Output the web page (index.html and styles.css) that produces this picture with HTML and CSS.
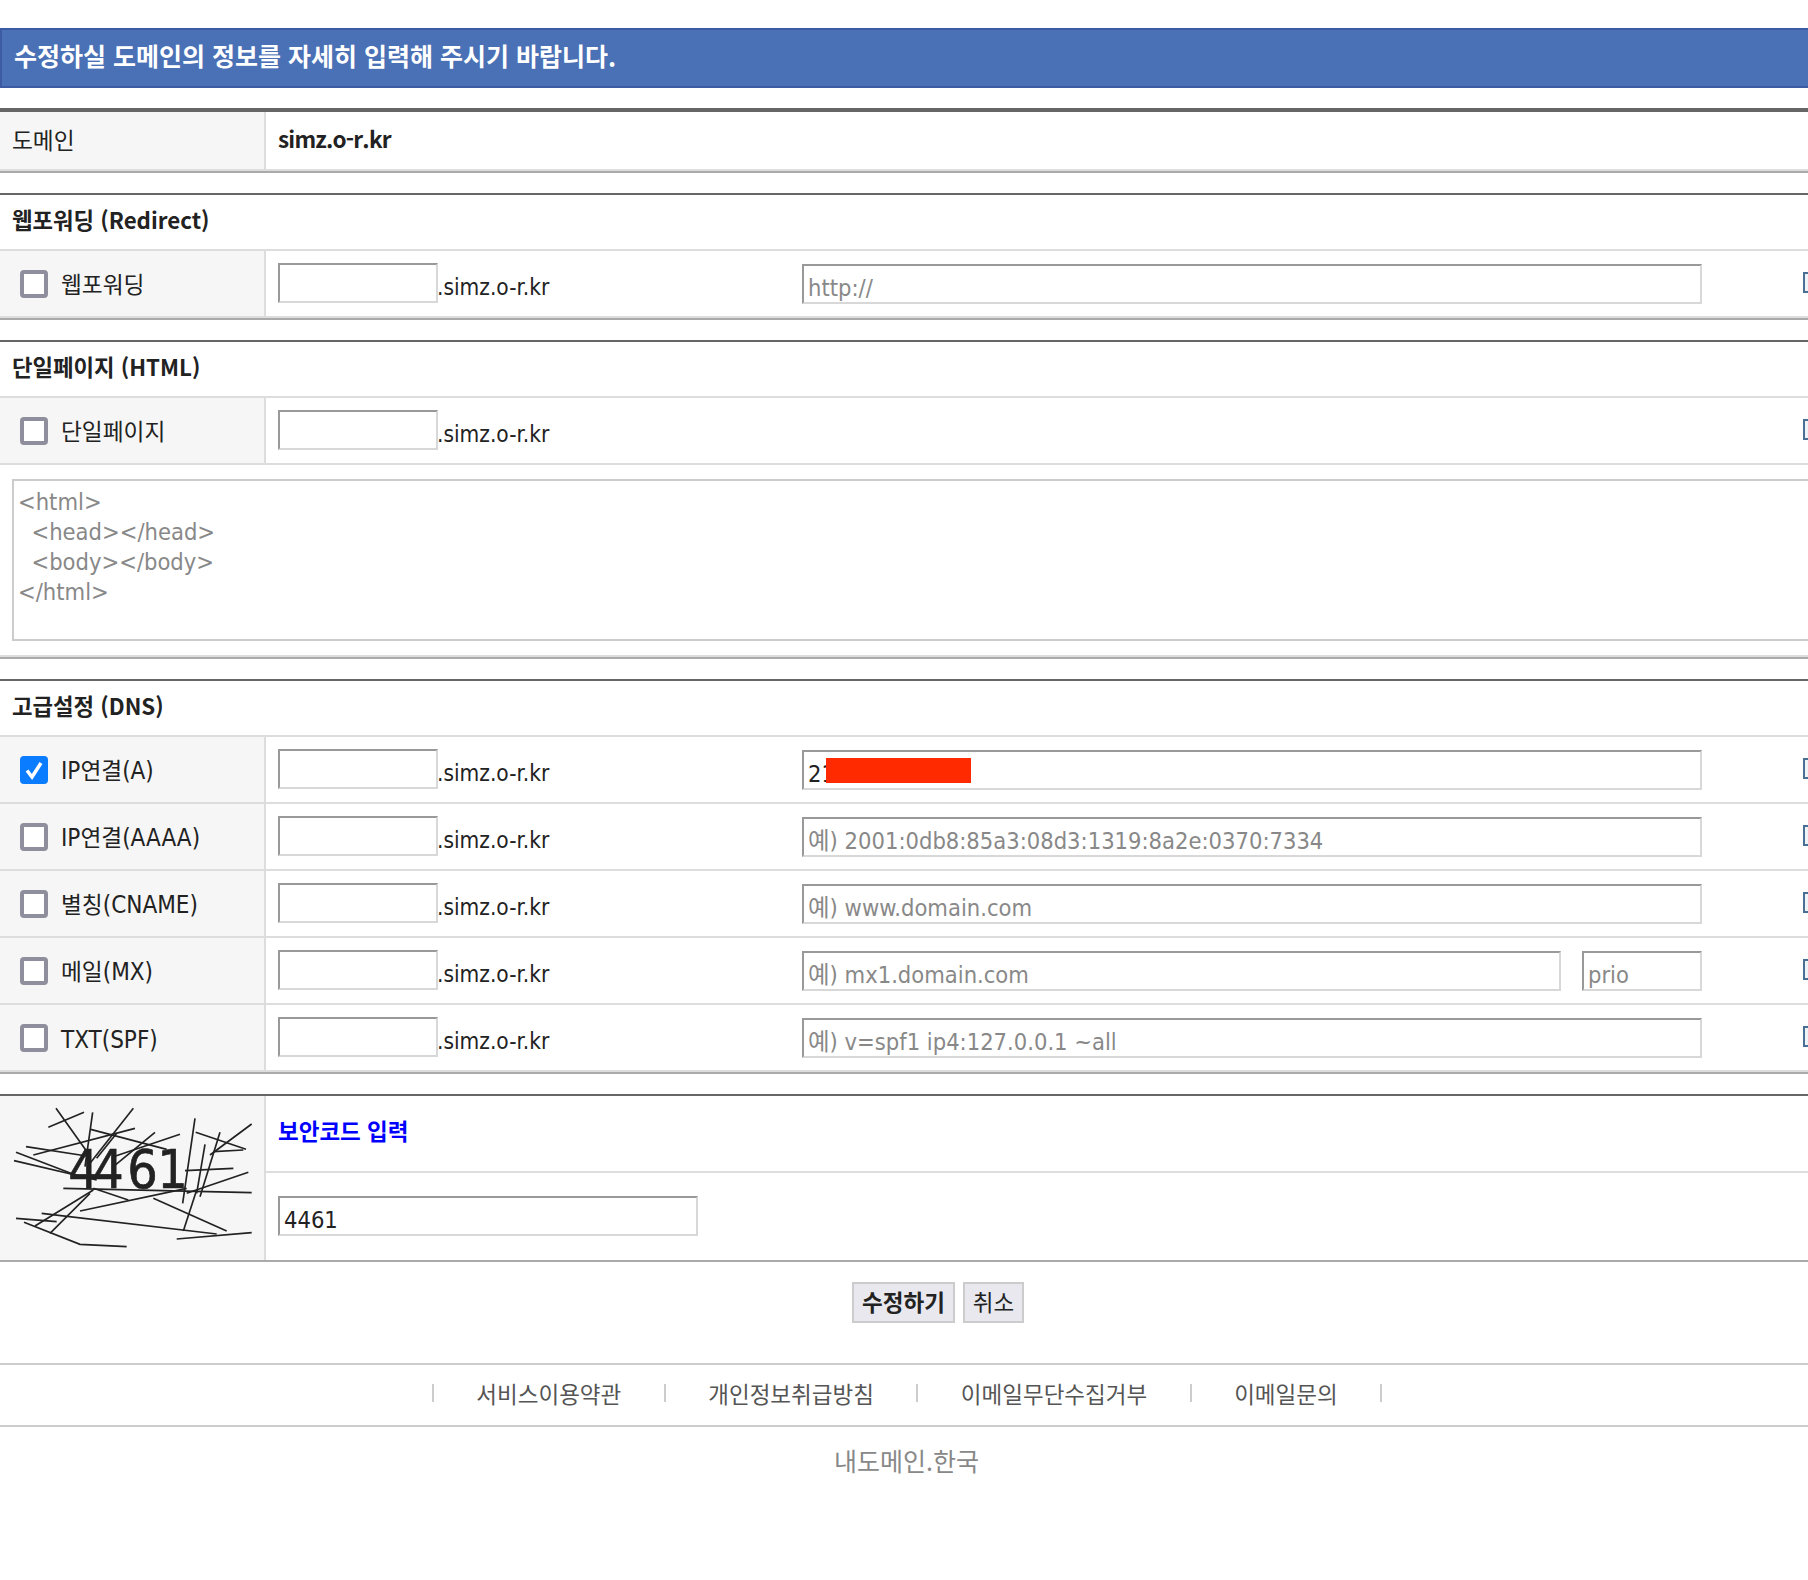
FILE: index.html
```html
<!DOCTYPE html>
<html lang="ko">
<head>
    <meta charset="UTF-8">
    <meta name="viewport" content="width=device-width, initial-scale=1.0">
    <title>도메인 수정</title>
    <link rel="stylesheet" href="styles.css">
</head>
<body>
    <div class="wrap">
        <h2 class="banner">수정하실 도메인의 정보를 자세히 입력해 주시기 바랍니다.</h2>

        <div class="tbl tbl-first">
            <div class="row row-domain">
                <div class="label">도메인</div>
                <div class="cell"><b class="domain-name">simz.o-r.kr</b></div>
            </div>
        </div>

        <div class="tbl">
            <div class="head">웹포워딩 (Redirect)</div>
            <div class="row">
                <div class="label"><span class="check"></span><span>웹포워딩</span></div>
                <div class="cell">
                    <input class="sub" type="text"><span class="suffix">.simz.o-r.kr</span>
                    <input class="target" type="text" placeholder="http://">
                    <span class="btn-edge"></span>
                </div>
            </div>
        </div>

        <div class="tbl">
            <div class="head">단일페이지 (HTML)</div>
            <div class="row">
                <div class="label"><span class="check"></span><span>단일페이지</span></div>
                <div class="cell">
                    <input class="sub" type="text"><span class="suffix">.simz.o-r.kr</span>
                    <span class="target-empty"></span>
                    <span class="btn-edge"></span>
                </div>
            </div>
            <div class="html-row">
                <textarea class="html-box" rows="5"><html>
  <head></head>
  <body></body>
</html></textarea>
            </div>
        </div>

        <div class="tbl">
            <div class="head">고급설정 (DNS)</div>
            <div class="row">
                <div class="label"><span class="check on"><svg viewBox="0 0 28 28" width="28" height="28"><path d="M7 14.5l5 6.5L21 7" fill="none" stroke="#fff" stroke-width="3.5"/></svg></span><span><span class="en">IP</span>연결<span class="en">(A)</span></span></div>
                <div class="cell">
                    <input class="sub" type="text"><span class="suffix">.simz.o-r.kr</span>
                    <span class="target-wrap">
                        <input class="target target-filled" type="text" value="21">
                        <span class="redact"></span>
                    </span>
                    <span class="btn-edge"></span>
                </div>
            </div>
            <div class="row">
                <div class="label"><span class="check"></span><span><span class="en">IP</span>연결<span class="en">(AAAA)</span></span></div>
                <div class="cell">
                    <input class="sub" type="text"><span class="suffix">.simz.o-r.kr</span>
                    <input class="target" type="text" placeholder="예) 2001:0db8:85a3:08d3:1319:8a2e:0370:7334">
                    <span class="btn-edge"></span>
                </div>
            </div>
            <div class="row">
                <div class="label"><span class="check"></span><span>별칭<span class="en">(CNAME)</span></span></div>
                <div class="cell">
                    <input class="sub" type="text"><span class="suffix">.simz.o-r.kr</span>
                    <input class="target" type="text" placeholder="예) www.domain.com">
                    <span class="btn-edge"></span>
                </div>
            </div>
            <div class="row">
                <div class="label"><span class="check"></span><span>메일<span class="en">(MX)</span></span></div>
                <div class="cell">
                    <input class="sub" type="text"><span class="suffix">.simz.o-r.kr</span>
                    <input class="target target-mx" type="text" placeholder="예) mx1.domain.com">
                    <input class="target prio" type="text" placeholder="prio">
                    <span class="btn-edge"></span>
                </div>
            </div>
            <div class="row row-last">
                <div class="label"><span class="check"></span><span class="en">TXT(SPF)</span></div>
                <div class="cell">
                    <input class="sub" type="text"><span class="suffix">.simz.o-r.kr</span>
                    <input class="target" type="text" placeholder="예) v=spf1 ip4:127.0.0.1 ~all">
                    <span class="btn-edge"></span>
                </div>
            </div>
        </div>

        <div class="tbl tbl-captcha">
            <div class="captcha-img">
                <svg viewBox="0 0 780 480" width="260" height="160">
                    <g class="captcha-lines">
                        <path d="M168 25L268 165"/>
                        <path d="M145 82L252 37"/>
                        <path d="M278 37L255 200"/>
                        <path d="M400 25L270 190"/>
                        <path d="M350 100L290 175"/>
                        <path d="M272 88L500 148"/>
                        <path d="M100 165L405 85"/>
                        <path d="M78 140L260 168"/>
                        <path d="M465 97L340 200"/>
                        <path d="M540 103L340 170"/>
                        <path d="M48 157L240 230"/>
                        <path d="M42 182L290 240"/>
                        <path d="M585 55L548 310"/>
                        <path d="M587 97L738 148"/>
                        <path d="M660 97L600 290"/>
                        <path d="M615 133L590 280"/>
                        <path d="M755 72L630 165"/>
                        <path d="M640 155L730 150"/>
                        <path d="M190 265L755 278"/>
                        <path d="M555 212L700 205"/>
                        <path d="M560 280L745 217"/>
                        <path d="M280 265L385 300"/>
                        <path d="M240 333L560 265"/>
                        <path d="M460 295L680 393"/>
                        <path d="M280 270L105 378"/>
                        <path d="M270 280L150 400"/>
                        <path d="M590 270L550 393"/>
                        <path d="M48 355L170 365"/>
                        <path d="M125 340L650 402"/>
                        <path d="M72 367L240 433L380 440"/>
                        <path d="M530 417L755 398"/>
                    </g>
                    <text class="captcha-text" x="205 280 382 472" y="265">4461</text>
                </svg>
            </div>
            <div class="captcha-side">
                <div class="captcha-title">보안코드 입력</div>
                <div class="captcha-input"><input class="code" type="text" value="4461"></div>
            </div>
        </div>

        <div class="actions">
            <button class="btn btn-main" type="button">수정하기</button>
            <button class="btn" type="button">취소</button>
        </div>
    </div>

    <div class="foot-links">
        <span class="sep"></span><a href="#">서비스이용약관</a>
        <span class="sep"></span><a href="#">개인정보취급방침</a>
        <span class="sep"></span><a href="#">이메일무단수집거부</a>
        <span class="sep"></span><a href="#">이메일문의</a>
        <span class="sep"></span>
    </div>
    <div class="brand">내도메인.한국</div>
</body>
</html>
```

FILE: styles.css
```css
html, body {
    overflow-x: hidden;
}
body {
    margin: 0;
    padding: 0;
    font-family: "DejaVu Sans Condensed", "Noto Sans CJK KR", sans-serif;
    font-size: 22.5px;
    color: #222;
    background-color: #fff;
}
.wrap {
    width: 1876px;
    padding-top: 28px;
}
.banner {
    margin: 0;
    height: 60px;
    box-sizing: border-box;
    padding-left: 12px;
    line-height: 50px;
    font-family: "Noto Sans CJK KR", sans-serif;
    font-size: 25px;
    font-weight: 700;
    color: #fff;
    background-color: #4a70b5;
    border: 2px solid #3c5ba3;
}
.tbl {
    margin-top: 20px;
    border-top: 2px solid #666;
    border-bottom: 2px solid #aaa;
}
.tbl-first {
    border-top-width: 4px;
}
.head {
    height: 54px;
    line-height: 48px;
    padding-left: 12px;
    font-family: "Noto Sans CJK KR", sans-serif;
    font-size: 22.3px;
    font-weight: 700;
    border-bottom: 2px solid #ddd;
}
.row {
    display: grid;
    grid-template-columns: 266px 1fr;
    height: 65px;
    border-bottom: 2px solid #ddd;
}
.row-domain {
    height: 57px;
}
.label {
    display: flex;
    align-items: center;
    padding: 3px 0 0 12px;
    font-size: 22.7px;
    line-height: 30px;
    background-color: #f6f6f6;
    border-right: 2px solid #ddd;
}
.row-domain .label {
    padding-top: 0;
}
.row-last .label {
    padding-top: 5px;
}
.en {
    font-size: 24px;
}
.check {
    flex: none;
    width: 28px;
    height: 28px;
    box-sizing: border-box;
    margin: -3px 13px 0 8px;
    background-color: #fff;
    border: 4px solid #8e8e9c;
    border-radius: 4px;
}
.row-last .check {
    margin-top: -5px;
}
.check.on {
    background-color: #0a7cff;
    border: none;
}
.check svg {
    display: block;
}
.cell {
    display: flex;
    align-items: flex-start;
    padding: 12px 0 0 12px;
}
.domain-name {
    font-family: "Noto Sans CJK KR", sans-serif;
    letter-spacing: -0.8px;
    line-height: 28px;
}
input, textarea {
    font-family: "DejaVu Sans Condensed", "Noto Sans CJK KR", sans-serif;
    font-size: 23.5px;
    color: #222;
    box-sizing: border-box;
    border-style: solid;
    border-width: 2px;
    border-color: #999 #d8d8d8 #d8d8d8 #999;
    border-radius: 0;
    outline: none;
    background-color: #fff;
}
input::placeholder {
    color: #888;
    opacity: 1;
}
.sub {
    flex: none;
    width: 160px;
    height: 40px;
}
.suffix {
    flex: none;
    width: 364px;
    line-height: 48px;
    margin-left: -1px;
    padding-right: 1px;
}
.target {
    flex: none;
    width: 900px;
    height: 40px;
    margin-top: 1px;
    padding: 8px 4px 0;
}
.target-empty {
    flex: none;
    width: 900px;
}
.target-mx {
    width: 759px;
}
.prio {
    width: 120px;
    margin-left: 21px;
}
.target-wrap {
    position: relative;
    flex: none;
    width: 900px;
}
.target-filled {
    display: block;
}
.redact {
    position: absolute;
    left: 24px;
    top: 9px;
    width: 145px;
    height: 25px;
    background-color: #ff2a00;
}
.btn-edge {
    flex: none;
    width: 20px;
    height: 21px;
    margin: 9px 0 0 101px;
    background-color: #eef3f8;
    border: 2px solid #4a6f94;
    box-sizing: border-box;
}
.html-row {
    height: 192px;
    box-sizing: border-box;
    padding-top: 14px;
    border-bottom: 2px solid #ddd;
}
.html-box {
    display: block;
    width: 1852px;
    height: 162px;
    margin-left: 12px;
    padding: 6px 4px;
    line-height: 30px;
    color: #888;
    border-color: #ccc;
    resize: none;
}
.tbl-captcha {
    display: grid;
    grid-template-columns: 266px 1fr;
    height: 164px;
}
.captcha-img {
    padding-top: 4px;
    background-color: #f6f6f6;
    border-right: 2px solid #ddd;
}
.captcha-img svg {
    display: block;
    filter: blur(0.4px);
}
.captcha-lines path {
    fill: none;
    stroke: #222;
    stroke-width: 5;
}
.captcha-text {
    font-family: "DejaVu Sans Condensed", sans-serif;
    font-size: 160px;
    fill: #222;
    stroke: #222;
    stroke-width: 2;
}
.captcha-title {
    height: 75px;
    line-height: 68px;
    padding-left: 12px;
    font-family: "Noto Sans CJK KR", sans-serif;
    font-weight: 700;
    color: #00f;
    border-bottom: 2px solid #ddd;
}
.captcha-input {
    padding: 23px 0 0 12px;
}
.code {
    display: block;
    width: 420px;
    height: 40px;
    padding: 8px 4px 0;
}
.actions {
    display: flex;
    justify-content: center;
    gap: 8px;
    height: 81px;
    padding-top: 20px;
}
.btn {
    width: 61px;
    height: 41px;
    padding: 0 0 3px;
    font-family: "Noto Sans CJK KR", sans-serif;
    font-size: 22.5px;
    color: #222;
    background-color: #e8e8ee;
    border: 2px solid #ccc;
}
.btn-main {
    width: 103px;
    font-weight: 700;
}
.foot-links {
    display: flex;
    justify-content: center;
    align-items: center;
    height: 64px;
    box-sizing: border-box;
    padding: 0 0 4px 6px;
    font-family: "Noto Sans CJK KR", sans-serif;
    border-top: 2px solid #ccc;
    border-bottom: 2px solid #ccc;
}
.foot-links a {
    padding: 0 42.5px;
    color: #555;
    text-decoration: none;
}
.sep {
    width: 2px;
    height: 18px;
    background-color: #ccc;
}
.brand {
    padding: 15px 0 0 5px;
    text-align: center;
    font-family: "Noto Sans CJK KR", sans-serif;
    font-size: 25px;
    color: #888;
}
```
